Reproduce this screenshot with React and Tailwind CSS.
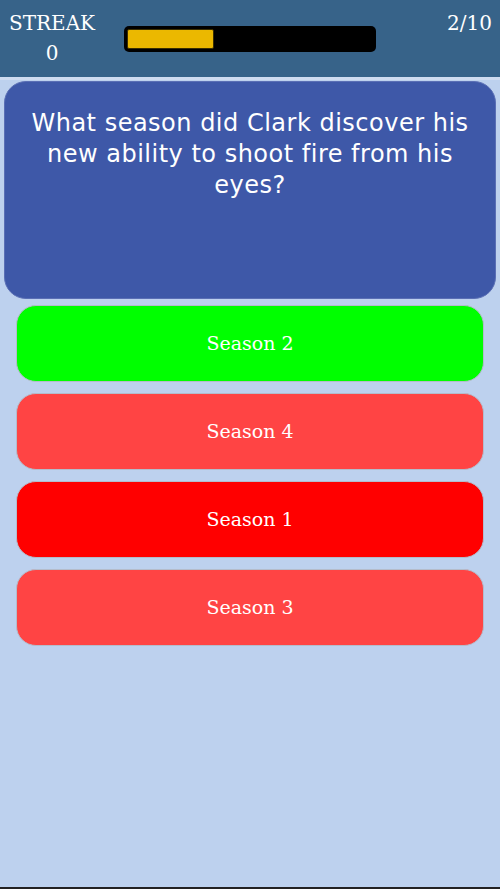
import React from 'react';

const answers = [
  { label: 'Season 2', color: 'bg-[#00ff00]' },
  { label: 'Season 4', color: 'bg-[#ff4444]' },
  { label: 'Season 1', color: 'bg-[#ff0000]' },
  { label: 'Season 3', color: 'bg-[#ff4444]' },
];

export default function App() {
  const serif = { fontFamily: '"DejaVu Serif", "Liberation Serif", serif' };
  return (
    <div className="w-[500px] h-[889px] bg-[#bdd1ee] flex flex-col overflow-hidden border-b-2 border-[#222]">
      {/* Header */}
      <div className="h-[80px] bg-[#376389] flex items-start justify-between px-2 border-b-[3px] border-[#cfdcf0] shrink-0">
        <div className="flex flex-col items-center text-white text-[20px] leading-[30px] pt-[8px] w-[88px]" style={serif}>
          <span>STREAK</span>
          <span>0</span>
        </div>
        <div className="mt-[26px] ml-[28px] w-[252px] h-[26px] bg-black rounded-[5px] p-[3px]">
          <div className="h-full w-[87px] bg-[#ebb800] rounded-[2px] border border-[#3a2e00]" />
        </div>
        <div className="flex-1 text-right text-white text-[20px] pt-[8px] leading-[30px]" style={serif}>2/10</div>
      </div>

      {/* Question */}
      <div className="mx-[4px] mt-[1px] h-[218px] bg-[#3e58a8] rounded-[22px] border border-[#5a6fb5] px-3 pt-[26px] shrink-0">
        <p className="text-white text-[24px] leading-[31px] text-center tracking-[0.5px]" style={{ fontFamily: '"DejaVu Sans", sans-serif' }}>
          What season did Clark discover his new ability to shoot fire from his eyes?
        </p>
      </div>

      {/* Answers */}
      <div className="flex flex-col gap-[11px] px-[16px] pt-[6px]">
        {answers.map((a) => (
          <button
            key={a.label}
            className={`h-[77px] w-full rounded-[20px] ${a.color} border border-[#b4bccb] text-white text-[19px] flex items-center justify-center`}
            style={serif}
          >
            {a.label}
          </button>
        ))}
      </div>
    </div>
  );
}
